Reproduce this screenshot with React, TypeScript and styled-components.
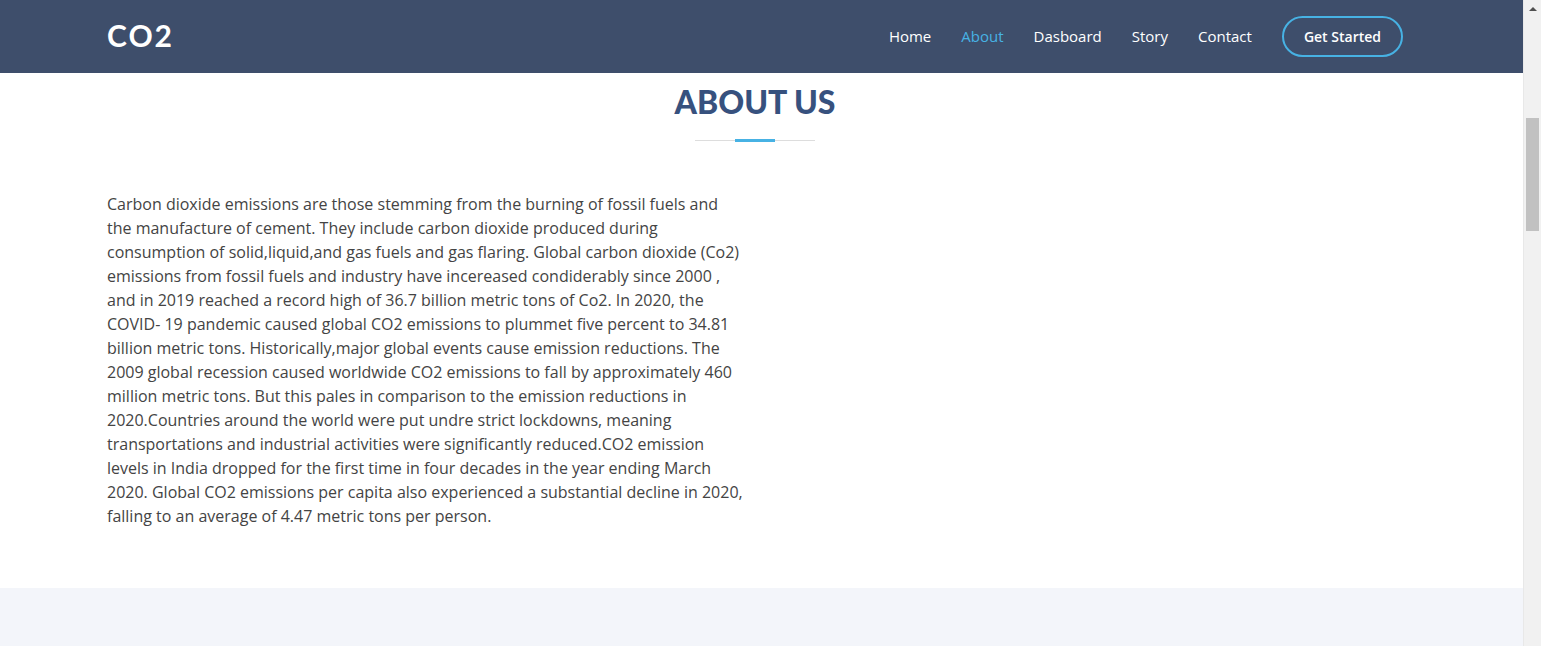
import React from "react";
import styled, { createGlobalStyle } from "styled-components";

const Global = createGlobalStyle`
  html, body { margin: 0; padding: 0; height: 100%; overflow: hidden; }
  body { font-family: "Open Sans", sans-serif; color: #444444; background: #fff; }
  * { box-sizing: border-box; }
`;

const Frame = styled.div`
  display: flex;
  width: 1541px;
  height: 646px;
  overflow: hidden;
`;

const Viewport = styled.div`
  flex: 1;
  display: flex;
  flex-direction: column;
  min-width: 0;
`;

const Header = styled.header`
  height: 73px;
  flex: none;
  background: #3e4e6b;
`;

const Container = styled.div`
  width: 1296px;
  margin-left: 107px;
`;

const HeaderInner = styled(Container)`
  height: 100%;
  display: flex;
  align-items: center;
`;

const Logo = styled.h1`
  margin: 0 0 3px;
  font-family: "Lato", sans-serif;
  font-size: 30px;
  font-weight: 700;
  letter-spacing: 2px;
  line-height: 1;
  color: #fff;
  text-transform: uppercase;
`;

const Nav = styled.nav`
  margin-left: auto;
  display: flex;
  align-items: center;
`;

const NavLink = styled.a<{ $active?: boolean }>`
  font-size: 15px;
  font-weight: 500;
  color: ${(p) => (p.$active ? "#47b2e4" : "#ffffff")};
  text-decoration: none;
  padding: 9px 0 11px 30px;
  white-space: nowrap;
`;

const CTA = styled.a`
  margin-left: 30px;
  height: 41px;
  padding: 0 20px;
  display: inline-flex;
  align-items: center;
  border: 2px solid #47b2e4;
  border-radius: 50px;
  color: #fff;
  font-size: 14px;
  font-weight: 600;
  white-space: nowrap;
  text-decoration: none;
`;

const About = styled.section`
  flex: none;
  height: 515px;
  background: #fff;
`;

const Title = styled.div`
  display: flex;
  flex-direction: column;
  align-items: center;
  padding-top: 10px;
`;

const H2 = styled.h2`
  margin: 0;
  font-family: "Lato", sans-serif;
  font-size: 32px;
  font-weight: 900;
  line-height: 38px;
  color: #37517e;
  text-transform: uppercase;
`;

const Rule = styled.div`
  margin-top: 18px;
  width: 120px;
  height: 3px;
  display: flex;
  align-items: center;
  justify-content: center;
  background: linear-gradient(#ddd, #ddd) center / 100% 1px no-repeat;
`;

const RuleAccent = styled.span`
  width: 40px;
  height: 3px;
  background: #47b2e4;
`;

const Row = styled.div`
  display: grid;
  grid-template-columns: 636px 636px;
  column-gap: 24px;
  padding-top: 50px;
`;

const Para = styled.p`
  margin: 0;
  font-size: 16px;
  line-height: 24px;
  color: #444444;
`;

const Services = styled.section`
  flex: 1;
  background: #f3f5fa;
`;

const Scrollbar = styled.div`
  width: 18px;
  flex: none;
  background: #f1f1f1;
  border-left: 1px solid #e8e8e8;
  display: flex;
  flex-direction: column;
  align-items: center;
`;

const Arrow = styled.div`
  margin-top: 7px;
  width: 0;
  height: 0;
  border-left: 4px solid transparent;
  border-right: 4px solid transparent;
  border-bottom: 4px solid #505050;
`;

const Thumb = styled.div`
  margin-top: 107px;
  width: 13px;
  height: 113px;
  background: #c1c1c1;
`;

export default function App() {
  return (
    <>
      <Global />
      <Frame>
        <Viewport>
          <Header>
            <HeaderInner>
              <Logo>CO2</Logo>
              <Nav>
                <NavLink href="#">Home</NavLink>
                <NavLink href="#" $active>About</NavLink>
                <NavLink href="#">Dasboard</NavLink>
                <NavLink href="#">Story</NavLink>
                <NavLink href="#">Contact</NavLink>
                <CTA href="#">Get Started</CTA>
              </Nav>
            </HeaderInner>
          </Header>
          <About>
            <Container>
              <Title>
                <H2>About Us</H2>
                <Rule>
                  <RuleAccent />
                </Rule>
              </Title>
              <Row>
                <Para>
                  Carbon dioxide emissions are those stemming from the burning of fossil fuels and the manufacture of cement. They include carbon dioxide produced during consumption of solid,liquid,and gas fuels and gas flaring. Global carbon dioxide (Co2) emissions from fossil fuels and industry have incereased condiderably since 2000 , and in 2019 reached a record high of 36.7 billion metric tons of Co2. In 2020, the COVID- 19 pandemic caused global CO2 emissions to plummet five percent to 34.81 billion metric tons. Historically,major global events cause emission reductions. The 2009 global recession caused worldwide CO2 emissions to fall by approximately 460 million metric tons. But this pales in comparison to the emission reductions in 2020.Countries around the world were put undre strict lockdowns, meaning transportations and industrial activities were significantly reduced.CO2 emission levels in India dropped for the first time in four decades in the year ending March 2020. Global CO2 emissions per capita also experienced a substantial decline in 2020, falling to an average of 4.47 metric tons per person.
                </Para>
              </Row>
            </Container>
          </About>
          <Services />
        </Viewport>
        <Scrollbar>
          <Arrow />
          <Thumb />
        </Scrollbar>
      </Frame>
    </>
  );
}
